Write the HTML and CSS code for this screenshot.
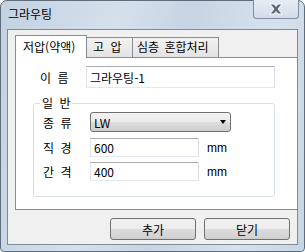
FILE: index.html
```html
<!DOCTYPE html>
<html lang="ko">
<head>
  <meta charset="UTF-8" />
  <title>그라우팅</title>
  <link rel="stylesheet" href="styles.css">
</head>
<body>
  <div class="window">
    <div class="titlebar">
      <span class="title">그라우팅</span>
      <span class="close-btn">
        <svg width="18" height="12" viewBox="0 0 18 12">
          <path d="M3 1h4l2 2.5L11 1h4l-4 5 4 5h-4l-2-2.5L7 11H3l4-5z" fill="#5b6570" stroke="#fff" stroke-width="1" stroke-linejoin="round"/>
        </svg>
      </span>
    </div>

    <div class="client">
      <div class="tabs">
        <span class="tab active">저압(약액)</span>
        <span class="tab t2">고 압</span>
        <span class="tab t3">심층 혼합처리</span>
      </div>

      <div class="panel">
        <div class="name-row">
          <span class="label">이 름</span>
          <input type="text" class="field name" value="그라우팅-1">
        </div>

        <!-- 일반 그룹 -->
        <div class="group">
          <span class="group-title">일 반</span>
          <div class="row combo-row">
            <span class="glabel">종 류</span>
            <div class="combo">
              <span>LW</span>
              <span class="arrow"></span>
            </div>
          </div>
          <div class="row r2">
            <span class="glabel">직 경</span>
            <input type="text" class="field small" value="600">
            <span class="unit">mm</span>
          </div>
          <div class="row r3">
            <span class="glabel">간 격</span>
            <input type="text" class="field small" value="400">
            <span class="unit">mm</span>
          </div>
        </div>
      </div>

      <div class="buttons">
        <button class="btn">추가</button>
        <button class="btn">닫기</button>
      </div>
    </div>
  </div>
</body>
</html>
```

FILE: styles.css
```css
* {
  box-sizing: border-box;
}

body {
  margin: 0;
  font-family: "Noto Sans CJK KR", "Liberation Sans", sans-serif;
  font-size: 12px;
  color: #000;
}

.window {
  width: 305px;
  height: 252px;
  border: 1px solid #5e6c7c;
  border-radius: 7px 7px 4px 4px;
  background: linear-gradient(100deg, #c3d1e1 0%, #d5e0ec 35%, #c6d4e3 55%, #d6e1ed 80%, #c7d5e4 100%);
  padding: 0 6px 6px 6px;
  display: flex;
  flex-direction: column;
}

.titlebar {
  height: 28px;
  display: flex;
  justify-content: space-between;
  align-items: flex-start;
}

.title {
  margin: 5px 0 0 1px;
  font-size: 12px;
  line-height: 16px;
}

.close-btn {
  width: 46px;
  height: 19px;
  margin-top: -1px;
  margin-right: -1px;
  border: 1px solid #7d8ca0;
  border-top: none;
  border-radius: 0 0 4px 4px;
  background: linear-gradient(#e6edf5, #d2dde9);
  display: flex;
  align-items: center;
  justify-content: center;
}

.client {
  flex: 1;
  border: 1px solid #7f8b99;
  background: #f0f0f0;
  padding: 5px 0 0 7px;
  display: flex;
  flex-direction: column;
}

.tabs {
  display: flex;
  align-items: flex-end;
  height: 22px;
}

.tab {
  height: 20px;
  border: 1px solid #898c95;
  border-bottom: none;
  border-left: none;
  background: linear-gradient(#f2f2f2, #e3e3e3);
  line-height: 18px;
  padding-left: 6px;
  white-space: nowrap;
  word-spacing: 3px;
}

.tab.active {
  height: 23px;
  width: 72px;
  margin-bottom: -1px;
  border-left: 1px solid #898c95;
  background: #fff;
  padding-left: 7px;
  line-height: 22px;
  position: relative;
}

.tab.t2 {
  width: 46px;
}

.tab.t3 {
  width: 86px;
  padding-left: 4px;
  word-spacing: 2px;
}

.panel {
  height: 153px;
  border: 1px solid #898c95;
  border-right: none;
  background: #fff;
}

.name-row {
  display: flex;
  align-items: center;
  margin-top: 8px;
}

.label {
  width: 70px;
  padding-left: 24px;
  word-spacing: 3px;
}

.field {
  font-family: "Noto Sans CJK KR", "Liberation Sans", sans-serif;
  font-size: 12px;
  border: 1px solid;
  border-color: #abadb3 #dbdfe6 #e3e9ef #e2e3ea;
  padding: 0 3px;
  outline: none;
  background: #fff;
}

.field.name {
  width: 189px;
  height: 22px;
}

.group {
  position: relative;
  margin: 15px 0 0 17px;
  width: 242px;
  height: 94px;
  border: 1px solid #d5dfe5;
  border-radius: 3px;
  padding: 8px 0 0 9px;
}

.group-title {
  position: absolute;
  top: -9px;
  left: 6px;
  padding: 0 2px;
  background: #fff;
  line-height: 16px;
  word-spacing: 3px;
}

.row {
  display: flex;
  align-items: center;
}

.glabel {
  width: 47px;
  word-spacing: 3px;
}

.combo {
  width: 141px;
  height: 20px;
  border: 1px solid #707070;
  border-radius: 3px;
  background: linear-gradient(#f2f2f2 0%, #ebebeb 50%, #dddddd 50%, #cfcfcf 100%);
  display: flex;
  align-items: center;
  justify-content: space-between;
  padding: 0 4px 0 3px;
}

.arrow {
  width: 0;
  height: 0;
  border-left: 3.5px solid transparent;
  border-right: 3.5px solid transparent;
  border-top: 4px solid #000;
}

.r2 {
  margin-top: 6px;
}

.r3 {
  margin-top: 5px;
}

.field.small {
  width: 109px;
  height: 19px;
}

.unit {
  margin-left: 8px;
  font-family: "Liberation Sans", sans-serif;
}

.buttons {
  display: flex;
  justify-content: flex-end;
  gap: 8px;
  margin-top: 8px;
  padding-right: 7px;
}

.btn {
  width: 86px;
  height: 22px;
  border: 1px solid #707070;
  border-radius: 3px;
  background: linear-gradient(#f2f2f2 0%, #ebebeb 50%, #dddddd 50%, #cfcfcf 100%);
  font-family: "Noto Sans CJK KR", sans-serif;
  font-size: 12px;
  padding: 0;
  color: #000;
}
```
